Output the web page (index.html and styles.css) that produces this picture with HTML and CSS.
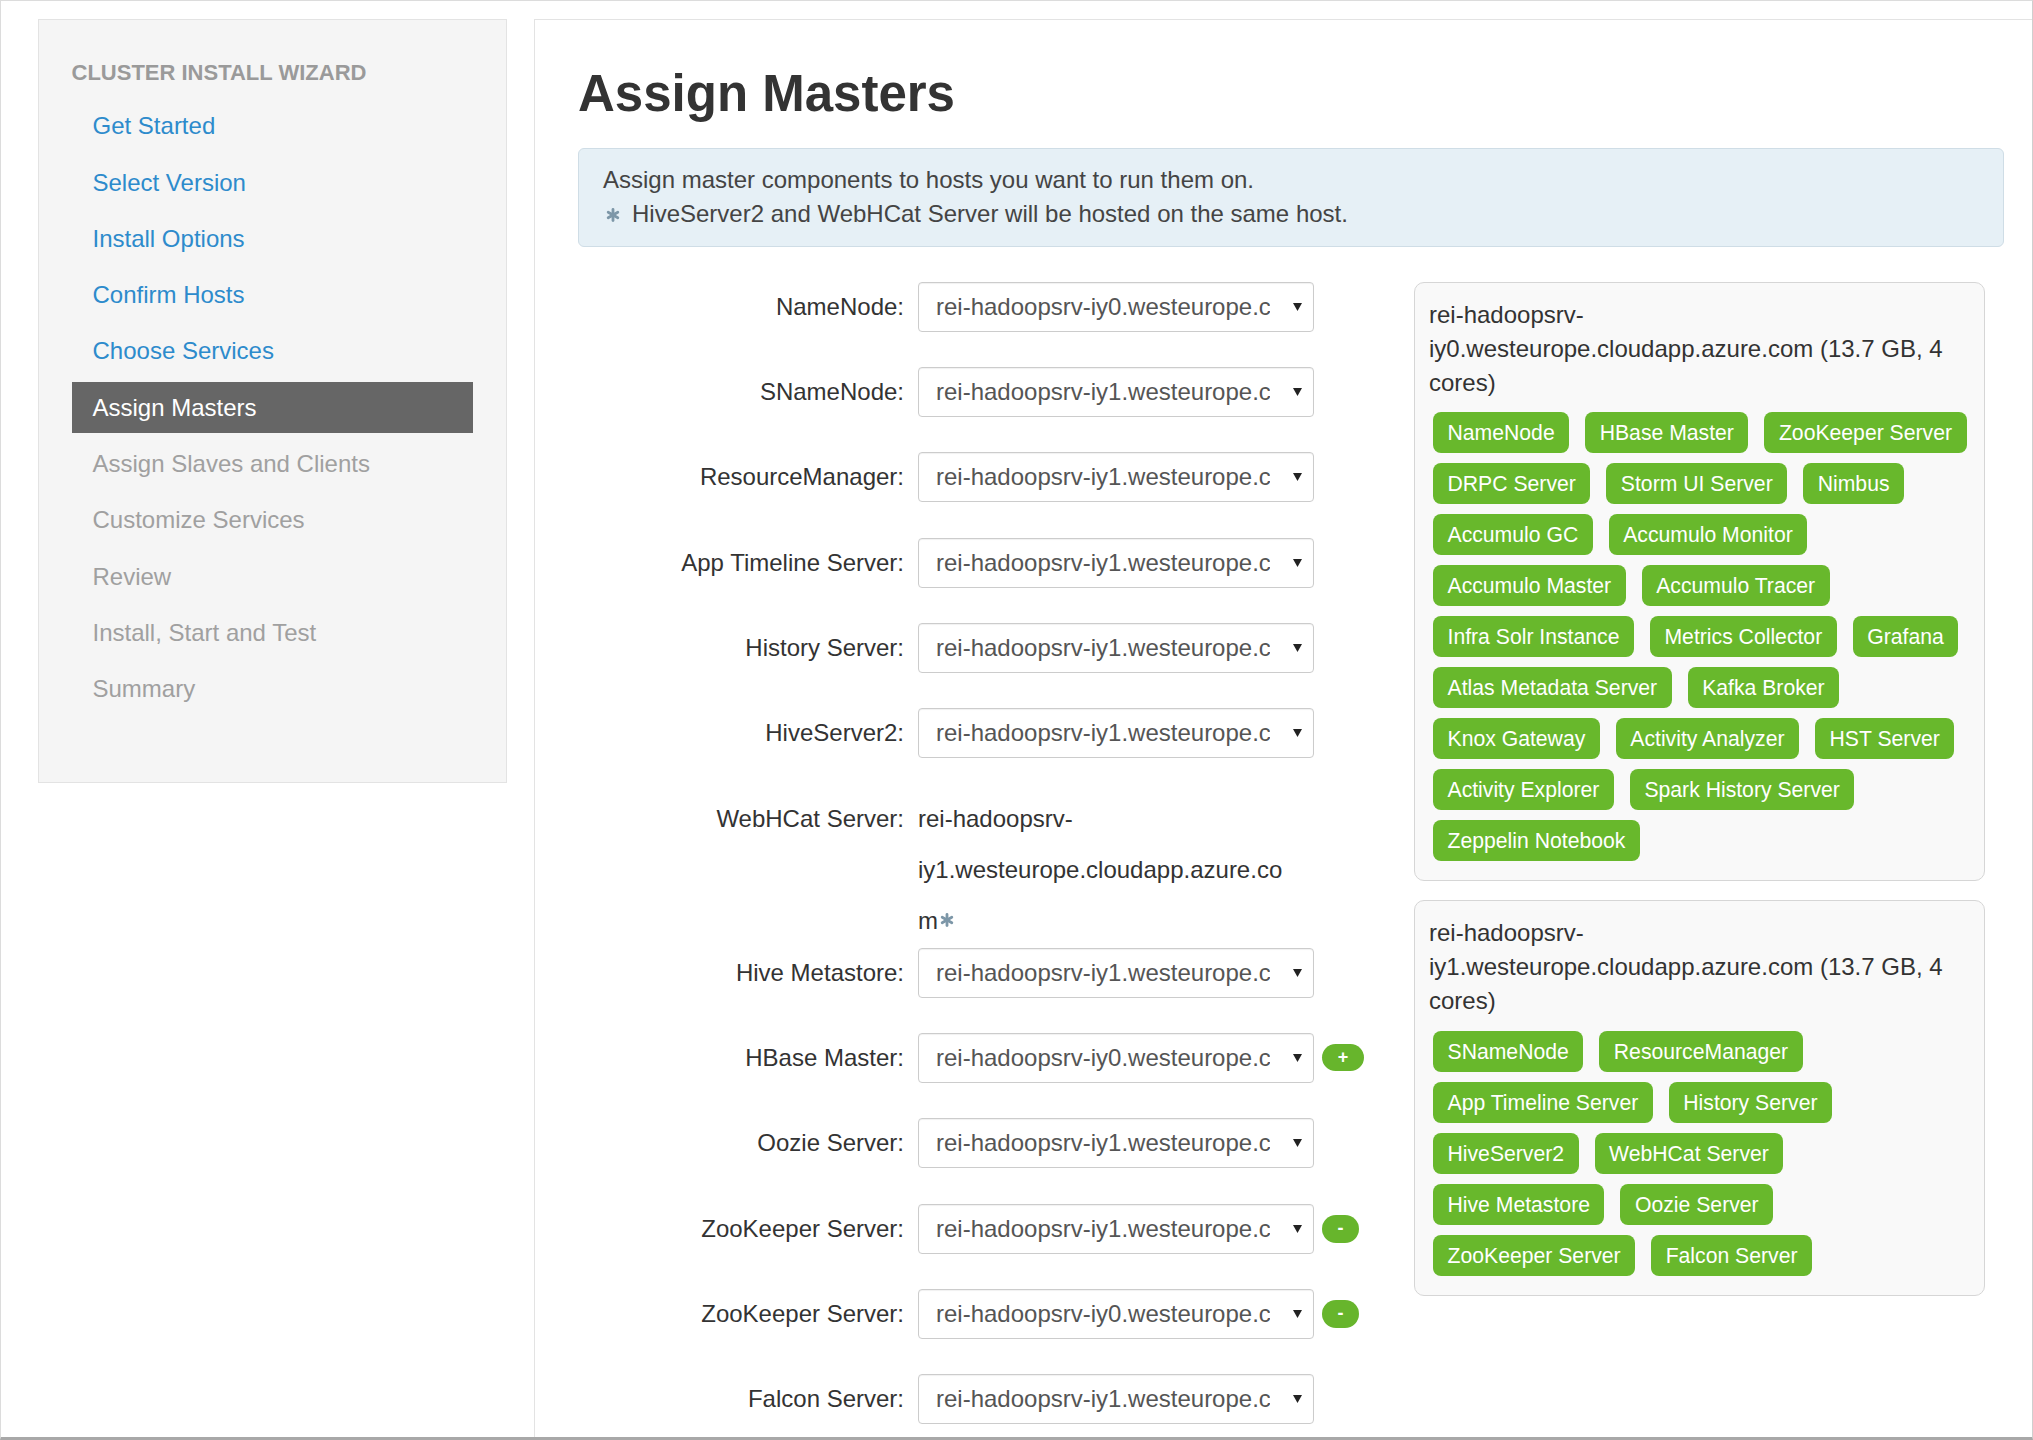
FILE: index.html
```html
<!DOCTYPE html>
<html lang="en">
<head>
<meta charset="utf-8">
<title>Assign Masters</title>
<link rel="stylesheet" href="styles.css">
</head>
<body>
<div class="frame">
  <aside class="sidebar">
    <div class="side-title">CLUSTER INSTALL WIZARD</div>
    <ul class="steps">
      <li class="step done">Get Started</li>
      <li class="step done">Select Version</li>
      <li class="step done">Install Options</li>
      <li class="step done">Confirm Hosts</li>
      <li class="step done">Choose Services</li>
      <li class="step active">Assign Masters</li>
      <li class="step todo">Assign Slaves and Clients</li>
      <li class="step todo">Customize Services</li>
      <li class="step todo">Review</li>
      <li class="step todo">Install, Start and Test</li>
      <li class="step todo">Summary</li>
    </ul>
  </aside>

  <main class="panel">
    <h1 class="title">Assign Masters</h1>
    <div class="alert">
      <div class="alert-line">Assign master components to hosts you want to run them on.</div>
      <div class="alert-line"><svg class="ast ast-alert" viewBox="0 0 14 14"><g stroke="currentColor" stroke-width="2.8" stroke-linecap="round"><line x1="7" y1="1.5" x2="7" y2="12.5"/><line x1="2.2" y1="4.2" x2="11.8" y2="9.8"/><line x1="2.2" y1="9.8" x2="11.8" y2="4.2"/></g></svg>HiveServer2 and WebHCat Server will be hosted on the same host.</div>
    </div>

    <div class="layout">
      <div class="form">
        <div class="row"><div class="label">NameNode:</div><div class="select"><span class="val">rei-hadoopsrv-iy0.westeurope.cloudapp.azure.com</span><svg class="caret" viewBox="0 0 9 8"><path d="M0 0H9L4.5 8Z"/></svg></div></div>
        <div class="row"><div class="label">SNameNode:</div><div class="select"><span class="val">rei-hadoopsrv-iy1.westeurope.cloudapp.azure.com</span><svg class="caret" viewBox="0 0 9 8"><path d="M0 0H9L4.5 8Z"/></svg></div></div>
        <div class="row"><div class="label">ResourceManager:</div><div class="select"><span class="val">rei-hadoopsrv-iy1.westeurope.cloudapp.azure.com</span><svg class="caret" viewBox="0 0 9 8"><path d="M0 0H9L4.5 8Z"/></svg></div></div>
        <div class="row"><div class="label">App Timeline Server:</div><div class="select"><span class="val">rei-hadoopsrv-iy1.westeurope.cloudapp.azure.com</span><svg class="caret" viewBox="0 0 9 8"><path d="M0 0H9L4.5 8Z"/></svg></div></div>
        <div class="row"><div class="label">History Server:</div><div class="select"><span class="val">rei-hadoopsrv-iy1.westeurope.cloudapp.azure.com</span><svg class="caret" viewBox="0 0 9 8"><path d="M0 0H9L4.5 8Z"/></svg></div></div>
        <div class="row"><div class="label">HiveServer2:</div><div class="select"><span class="val">rei-hadoopsrv-iy1.westeurope.cloudapp.azure.com</span><svg class="caret" viewBox="0 0 9 8"><path d="M0 0H9L4.5 8Z"/></svg></div></div>
        <div class="row row-static"><div class="label">WebHCat Server:</div><div class="static-val">rei-hadoopsrv-iy1.westeurope.cloudapp.azure.com<svg class="ast ast-inline" viewBox="0 0 14 14"><g stroke="currentColor" stroke-width="2.8" stroke-linecap="round"><line x1="7" y1="1.5" x2="7" y2="12.5"/><line x1="2.2" y1="4.2" x2="11.8" y2="9.8"/><line x1="2.2" y1="9.8" x2="11.8" y2="4.2"/></g></svg></div></div>
        <div class="row"><div class="label">Hive Metastore:</div><div class="select"><span class="val">rei-hadoopsrv-iy1.westeurope.cloudapp.azure.com</span><svg class="caret" viewBox="0 0 9 8"><path d="M0 0H9L4.5 8Z"/></svg></div></div>
        <div class="row"><div class="label">HBase Master:</div><div class="select"><span class="val">rei-hadoopsrv-iy0.westeurope.cloudapp.azure.com</span><svg class="caret" viewBox="0 0 9 8"><path d="M0 0H9L4.5 8Z"/></svg></div><span class="btn-pill btn-add">+</span></div>
        <div class="row"><div class="label">Oozie Server:</div><div class="select"><span class="val">rei-hadoopsrv-iy1.westeurope.cloudapp.azure.com</span><svg class="caret" viewBox="0 0 9 8"><path d="M0 0H9L4.5 8Z"/></svg></div></div>
        <div class="row"><div class="label">ZooKeeper Server:</div><div class="select"><span class="val">rei-hadoopsrv-iy1.westeurope.cloudapp.azure.com</span><svg class="caret" viewBox="0 0 9 8"><path d="M0 0H9L4.5 8Z"/></svg></div><span class="btn-pill btn-remove">-</span></div>
        <div class="row"><div class="label">ZooKeeper Server:</div><div class="select"><span class="val">rei-hadoopsrv-iy0.westeurope.cloudapp.azure.com</span><svg class="caret" viewBox="0 0 9 8"><path d="M0 0H9L4.5 8Z"/></svg></div><span class="btn-pill btn-remove">-</span></div>
        <div class="row"><div class="label">Falcon Server:</div><div class="select"><span class="val">rei-hadoopsrv-iy1.westeurope.cloudapp.azure.com</span><svg class="caret" viewBox="0 0 9 8"><path d="M0 0H9L4.5 8Z"/></svg></div></div>
      </div>

      <div class="hosts">
        <div class="card">
          <div class="host-name">rei-hadoopsrv-iy0.westeurope.cloudapp.azure.com (13.7 GB, 4 cores)</div>
          <div class="badges">
            <span class="badge">NameNode</span>
            <span class="badge">HBase Master</span>
            <span class="badge">ZooKeeper Server</span>
            <span class="badge">DRPC Server</span>
            <span class="badge">Storm UI Server</span>
            <span class="badge">Nimbus</span>
            <span class="badge">Accumulo GC</span>
            <span class="badge">Accumulo Monitor</span>
            <span class="badge">Accumulo Master</span>
            <span class="badge">Accumulo Tracer</span>
            <span class="badge">Infra Solr Instance</span>
            <span class="badge">Metrics Collector</span>
            <span class="badge">Grafana</span>
            <span class="badge">Atlas Metadata Server</span>
            <span class="badge">Kafka Broker</span>
            <span class="badge">Knox Gateway</span>
            <span class="badge">Activity Analyzer</span>
            <span class="badge">HST Server</span>
            <span class="badge">Activity Explorer</span>
            <span class="badge">Spark History Server</span>
            <span class="badge">Zeppelin Notebook</span>
          </div>
        </div>
        <div class="card">
          <div class="host-name">rei-hadoopsrv-iy1.westeurope.cloudapp.azure.com (13.7 GB, 4 cores)</div>
          <div class="badge-rows">
            <div class="badge-row"><span class="badge">SNameNode</span><span class="badge">ResourceManager</span></div>
            <div class="badge-row"><span class="badge">App Timeline Server</span><span class="badge">History Server</span></div>
            <div class="badge-row"><span class="badge">HiveServer2</span><span class="badge">WebHCat Server</span></div>
            <div class="badge-row"><span class="badge">Hive Metastore</span><span class="badge">Oozie Server</span></div>
            <div class="badge-row"><span class="badge">ZooKeeper Server</span><span class="badge">Falcon Server</span></div>
          </div>
        </div>
      </div>
    </div>
  </main>
</div>
</body>
</html>
```

FILE: styles.css
```css
html, body {
  margin: 0;
  padding: 0;
  background: #ffffff;
}

body {
  font-family: "Liberation Sans", Arial, Helvetica, sans-serif;
  color: #333333;
}

.frame {
  box-sizing: border-box;
  width: 2033px;
  height: 1440px;
  overflow: hidden;
  display: flex;
  align-items: flex-start;
  gap: 27px;
  padding: 18px 0 0 36.5px;
  border-top: 1px solid #dcdcdc;
  border-left: 1px solid #dcdcdc;
  border-right: 1px solid #cfcfcf;
  border-bottom: 3px solid #a8a8a8;
}

/* ---------- sidebar ---------- */
.sidebar {
  box-sizing: border-box;
  flex: 0 0 469.5px;
  background: #f5f5f5;
  border: 1px solid #e3e3e3;
  padding: 38px 33px 68px 33px;
}

.side-title {
  font-size: 22px;
  font-weight: bold;
  line-height: 30px;
  color: #9a9a9a;
  margin-bottom: 12.3px;
}

.steps {
  list-style: none;
  margin: 0;
  padding: 0;
  display: flex;
  flex-direction: column;
  gap: 5.3px;
}

.step {
  height: 51px;
  line-height: 51px;
  padding-left: 21px;
  font-size: 24px;
  white-space: nowrap;
}

.step.done { color: #2d8bcc; }
.step.todo { color: #a0a0a0; }
.step.active {
  background: #666666;
  color: #ffffff;
}

/* ---------- main panel ---------- */
.panel {
  box-sizing: border-box;
  flex: 1 1 auto;
  align-self: stretch;
  border-top: 1px solid #e3e3e3;
  border-left: 1px solid #e3e3e3;
  padding: 44.3px 28px 0 43px;
}

.title {
  margin: 0 0 23.7px;
  font-size: 51px;
  line-height: 60px;
  font-weight: bold;
  color: #333333;
}

.alert {
  background: #e6f0f6;
  border: 1px solid #cfdde6;
  border-radius: 6px;
  padding: 14.5px 24px 14.5px 24px;
  color: #444444;
  font-size: 24px;
  line-height: 34px;
}

.ast {
  display: inline-block;
  color: #7d97a8;
}

.ast-alert {
  width: 14px;
  height: 14px;
  margin: 0 12px 0 3px;
  vertical-align: 0px;
}

.ast-inline {
  width: 14px;
  height: 14px;
  margin-left: 2px;
  vertical-align: 2px;
}

.layout {
  display: flex;
  align-items: flex-start;
  margin-top: 34.7px;
}

/* ---------- form ---------- */
.form {
  flex: 0 0 836px;
}

.row {
  display: flex;
  align-items: center;
  height: 50px;
  margin-bottom: 35.3px;
}

.label {
  box-sizing: border-box;
  flex: 0 0 340px;
  padding-right: 14px;
  text-align: right;
  font-size: 24px;
  color: #333333;
  white-space: nowrap;
}

.select {
  box-sizing: border-box;
  flex: 0 0 396px;
  height: 50px;
  display: flex;
  align-items: center;
  padding-left: 17px;
  background: #ffffff;
  border: 1px solid #cccccc;
  border-radius: 4px;
  box-shadow: inset 0 1px 1px rgba(0, 0, 0, 0.06);
}

.val {
  width: 334px;
  overflow: hidden;
  white-space: nowrap;
  font-size: 24px;
  color: #555555;
}

.caret {
  width: 9px;
  height: 8px;
  margin-left: 23px;
  fill: #222222;
}

.row-static {
  height: auto;
  align-items: flex-start;
  margin-bottom: 1.2px;
}

.row-static .label {
  line-height: 51px;
}

.static-val {
  width: 376px;
  font-size: 24px;
  line-height: 51px;
  color: #333333;
  overflow-wrap: break-word;
}

.btn-pill {
  box-sizing: border-box;
  display: flex;
  align-items: center;
  justify-content: center;
  margin-left: 8px;
  background: #67b52c;
  color: #ffffff;
  font-weight: bold;
  font-size: 18px;
}

.btn-add {
  width: 42px;
  height: 27px;
  border-radius: 14px;
}

.btn-remove {
  width: 37px;
  height: 28px;
  border-radius: 14px;
}

/* ---------- host cards ---------- */
.hosts {
  flex: 0 0 571px;
  display: flex;
  flex-direction: column;
  gap: 19px;
}

.card {
  box-sizing: border-box;
  background: #f9f9f9;
  border: 1px solid #d6d6d6;
  border-radius: 10px;
  padding: 15px 8px 19px 14px;
}

.host-name {
  font-size: 24px;
  line-height: 34px;
  color: #333333;
  padding-right: 14px;
}

.badges {
  display: flex;
  flex-wrap: wrap;
  gap: 10px 16px;
  margin-top: 12.7px;
  padding-left: 4px;
}

.badge-rows {
  display: flex;
  flex-direction: column;
  gap: 10px;
  margin-top: 12.7px;
  padding-left: 4px;
}

.badge-row {
  display: flex;
  gap: 16px;
}

.badge {
  height: 41px;
  line-height: 41px;
  padding: 0 14.5px;
  border-radius: 8px;
  background: #68b82c;
  color: #ffffff;
  font-size: 21.2px;
  white-space: nowrap;
}
```
